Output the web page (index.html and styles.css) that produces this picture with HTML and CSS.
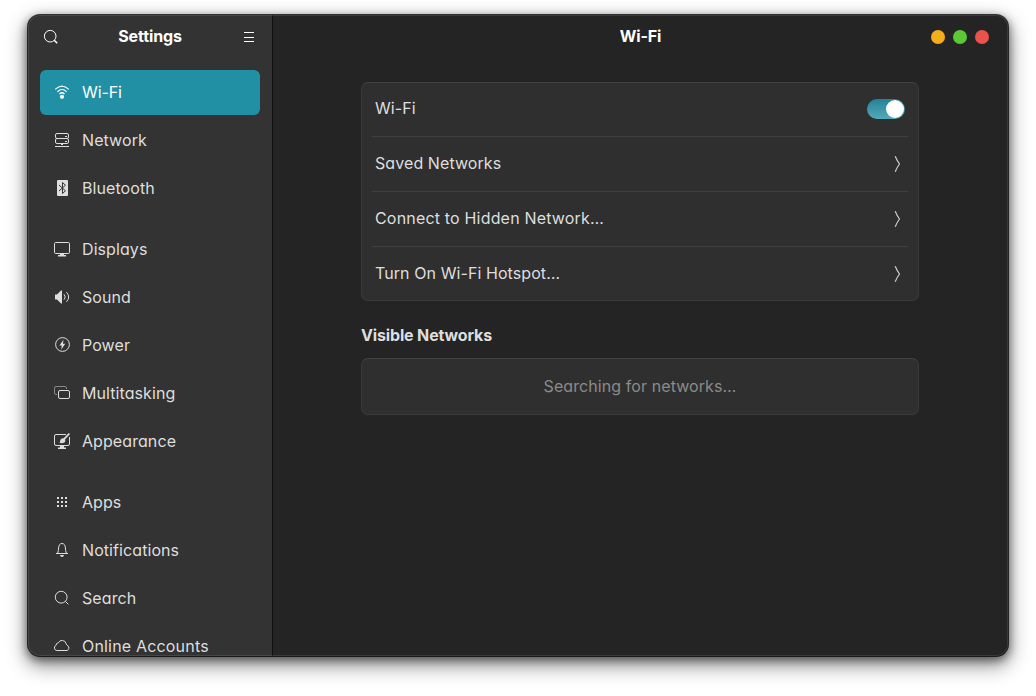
FILE: index.html
```html
<!DOCTYPE html>
<html lang="en">
<head>
<meta charset="utf-8">
<title>Settings</title>
<link rel="stylesheet" href="styles.css">
</head>
<body>
<div class="window">
  <aside class="sidebar">
    <header class="sidebar-header">
      <svg class="icon" viewBox="0 0 16 16"><circle cx="7.2" cy="7.2" r="5.8"/><path d="M11.2 11.2l3 3" stroke-width="1.5"/></svg>
      <h1 class="title">Settings</h1>
      <svg class="icon crisp" viewBox="0 0 16 16"><path d="M3 3.5h10M3 8.5h10M3 12.5h10"/></svg>
    </header>
    <nav class="nav">
      <div class="group">
        <a class="item selected"><svg class="icon" viewBox="0 0 16 16"><path d="M1.2 5.4Q8-1.2 14.8 5.4M3.4 7.8Q8 3.2 12.6 7.8M5.5 10Q8 7.5 10.5 10" stroke-width="1.2"/><circle class="solid" cx="8" cy="12.8" r="2.1"/></svg><span>Wi-Fi</span></a>
        <a class="item"><svg class="icon" viewBox="0 0 16 16"><rect x="1.5" y="1.500" width="13" height="5" rx="1.5"/><rect x="1.5" y="6.500" width="13" height="5" rx="1.5"/><path d="M11 4.500h2M11 9.500h2M1 14.500h14M7 12.500h2"/></svg><span>Network</span></a>
        <a class="item"><svg class="icon" viewBox="0 0 16 16"><rect class="solid" x="3" y="0" width="11" height="16" rx="1"/><path class="cutout" d="M5 5l6.500 5.800L8.500 13.500v-11l3 2.700L5 11"/></svg><span>Bluetooth</span></a>
      </div>
      <div class="group">
        <a class="item"><svg class="icon" viewBox="0 0 16 16"><rect x=".5" y="1.500" width="15" height="11" rx="1.2"/><path class="solid" d="M6 12.500h4V14h2v1.500H4V14h2z"/></svg><span>Displays</span></a>
        <a class="item"><svg class="icon" viewBox="0 0 16 16"><path class="solid" d="M1 5.500h2L7 1.500h1v13H7l-4-4H1z"/><path d="M10 5.300q2.500 2.700 0 5.400M12.500 3.200q4.300 4.800 0 9.600"/></svg><span>Sound</span></a>
        <a class="item"><svg class="icon" viewBox="0 0 16 16"><circle cx="8.500" cy="7.500" r="6.900"/><path class="solid" d="M9.500 2.500L5.500 8.500h2.300l-.6 4.200 4-6H8.900z"/></svg><span>Power</span></a>
        <a class="item"><svg class="icon" viewBox="0 0 16 16"><path class="faint" d="M12.500 4V3a1.500 1.500 0 0 0-1.500-1.500H2A1.500 1.500 0 0 0 .5 3v5A1.500 1.500 0 0 0 2 9.500h1"/><rect x="4.500" y="5.500" width="11" height="8" rx="1.500"/></svg><span>Multitasking</span></a>
        <a class="item"><svg class="icon" viewBox="0 0 16 16"><path d="M12 1.500H2A1.500 1.500 0 0 0 .5 3v8A1.500 1.500 0 0 0 2 12.500h12a1.500 1.500 0 0 0 1.500-1.500V4"/><path class="solid" d="M6 13h4v1.500h2V16H4v-1.500h2zM5.500 9.800q.8-1.400.8-2.800 1.200-2.200 3.400-1.700L14.700 0l1.300 1-5 5.500q1 2.500-1.200 3.300-2 .8-4.300 0z"/></svg><span>Appearance</span></a>
      </div>
      <div class="group">
        <a class="item"><svg class="icon crisp" viewBox="0 0 16 16"><path class="dots" d="M3 4h2M7 4h2M11 4h2M3 8h2M7 8h2M11 8h2M3 12h2M7 12h2M11 12h2"/></svg><span>Apps</span></a>
        <a class="item"><svg class="icon" viewBox="0 0 16 16"><path d="M2 11.500h12M3.700 11q.8-2 .9-5C4.700 3.200 6 1.500 8 1.500s3.300 1.700 3.400 4.500q.1 3 .9 5"/><path class="solid" d="M6 13h4q-.4 2-2 2t-2-2z"/></svg><span>Notifications</span></a>
        <a class="item"><svg class="icon" viewBox="0 0 16 16"><circle cx="7.200" cy="7.200" r="5.900"/><path d="M11.400 11.400l3 3"/></svg><span>Search</span></a>
        <a class="item wide"><svg class="icon cloud" viewBox="0 0 16 16"><path d="M2.800 12.500A2.700 2.700 0 0 1 2.100 7.300 2.500 2.500 0 0 1 4.300 4.800 4.200 4.200 0 0 1 12.200 5.800Q12.500 7 13.900 7.800A2.800 2.800 0 0 1 13.200 12.500z"/></svg><span>Online Accounts</span></a>
      </div>
    </nav>
  </aside>
  <main class="main">
    <header class="main-header">
      <h2 class="title">Wi-Fi</h2>
      <div class="controls"><i class="dot minimize"></i><i class="dot maximize"></i><i class="dot close"></i></div>
    </header>
    <div class="content">
      <section class="card">
        <div class="row"><span class="label">Wi-Fi</span><span class="switch"><i class="knob"></i></span></div>
        <div class="row"><span class="label">Saved Networks</span><svg class="chevron" viewBox="0 0 8 18"><path d="M1.200 1.200q2 4.800 4.300 7.800Q3.200 12 1.200 16.800"/></svg></div>
        <div class="row"><span class="label wide">Connect to Hidden Network…</span><svg class="chevron" viewBox="0 0 8 18"><path d="M1.200 1.200q2 4.800 4.300 7.800Q3.200 12 1.200 16.800"/></svg></div>
        <div class="row"><span class="label">Turn On Wi-Fi Hotspot…</span><svg class="chevron" viewBox="0 0 8 18"><path d="M1.200 1.200q2 4.800 4.300 7.800Q3.200 12 1.200 16.800"/></svg></div>
      </section>
      <h3 class="section-title">Visible Networks</h3>
      <section class="card status">Searching for networks…</section>
    </div>
  </main>
</div>
</body>
</html>
```
FILE: styles.css
```css
* { box-sizing: border-box; }
body {
  margin: 0;
  padding: 15px 28px 0;
  height: 696px;
  overflow: hidden;
  background: #fff;
  color: #dedede;
  font: 420 16px/20px Inter, "Liberation Sans", sans-serif;
  font-feature-settings: "cv11";
  letter-spacing: .08px;
}
h1, h2, h3 { margin: 0; }
.window {
  position: relative;
  display: flex;
  width: 980px;
  height: 641px;
  border-radius: 12px;
  overflow: hidden;
  background: #242424;
  box-shadow: 0 0 0 1px rgba(0,0,0,.75), 0 3px 10px 1px rgba(0,0,0,.5), 0 8px 20px 2px rgba(0,0,0,.42);
}
/* highlight along the window edge, above both panes */
.window::after {
  content: "";
  position: absolute;
  inset: 0;
  border-radius: 12px;
  box-shadow: inset 0 0 0 1px rgba(255,255,255,.1);
  pointer-events: none;
}
.sidebar {
  width: 245px;
  flex: none;
  background: #333;
  border-right: 1px solid #101010;
  overflow: hidden;
}
.sidebar-header {
  height: 43px;
  padding: 0 15px;
  display: flex;
  align-items: center;
  justify-content: space-between;
  color: #fff;
}
.title { font-size: 16px; font-weight: 700; line-height: 20px; color: #fff; padding-bottom: 2px; letter-spacing: -.1px; }
.nav {
  padding: 12px 12px 0;
  display: flex;
  flex-direction: column;
  gap: 16px;
}
.group { display: flex; flex-direction: column; gap: 3px; }
.item {
  height: 45px;
  flex: none;
  padding: 0 0 2px 14px;
  display: flex;
  align-items: center;
  gap: 12px;
  border-radius: 6px;
  white-space: nowrap;
}
.wide { letter-spacing: .18px; }
.selected { background: #2190a4; color: #fff; letter-spacing: -.1px; }
.icon {
  width: 16px;
  height: 16px;
  flex: none;
  fill: none;
  stroke: currentColor;
  stroke-width: 1;
}
.crisp { shape-rendering: crispEdges; }
.solid { fill: currentColor; stroke: none; }
.cutout { stroke: #333; }
.faint { opacity: .5; }
.dots { stroke-width: 2; }
.cloud { overflow: visible; }
.main { flex: 1; min-width: 0; }
.main-header {
  height: 43px;
  padding: 0 19px;
  display: grid;
  grid-template-columns: 1fr auto 1fr;
  align-items: center;
}
.main-header .title { grid-column: 2; }
.controls { display: flex; gap: 8px; justify-self: end; padding-top: 1px; }
.dot { width: 14px; height: 14px; border-radius: 50%; }
.minimize { background: #f2ae1b; }
.maximize { background: #5bc936; }
.close { background: #eb524a; }
.content { width: 558px; margin: 24px auto 0 88px; }
.card {
  background: #2f2f2f;
  border: 1px solid #3a3a3a;
  border-top-color: #424242;
  border-radius: 7px;
  padding: 0 10px;
}
.row {
  height: 55px;
  padding: 0 3px;
  display: flex;
  align-items: center;
  justify-content: space-between;
  border-bottom: 1px solid #3f3f3f;
}
.row:first-child { height: 54px; padding-bottom: 2px; }
.row:last-child { height: 53px; border-bottom: 0; }
.label { padding-bottom: 2px; }
.switch {
  width: 38px;
  height: 20px;
  padding: 1px;
  border-radius: 10px;
  display: flex;
  justify-content: flex-end;
  background: linear-gradient(#238297, #55a9b8);
}
.knob { width: 18px; height: 18px; border-radius: 50%; background: #fff; }
.chevron { width: 8px; height: 18px; margin-right: 3px; fill: none; stroke: #d0d0d0; stroke-width: 1.2; }
.section-title { margin-top: 24px; font-size: 16px; line-height: 20px; font-weight: 700; letter-spacing: -.15px; }
.status {
  height: 57px;
  margin-top: 13px;
  padding-bottom: 2px;
  display: flex;
  align-items: center;
  justify-content: center;
  color: #8b8b8b;
}
```
